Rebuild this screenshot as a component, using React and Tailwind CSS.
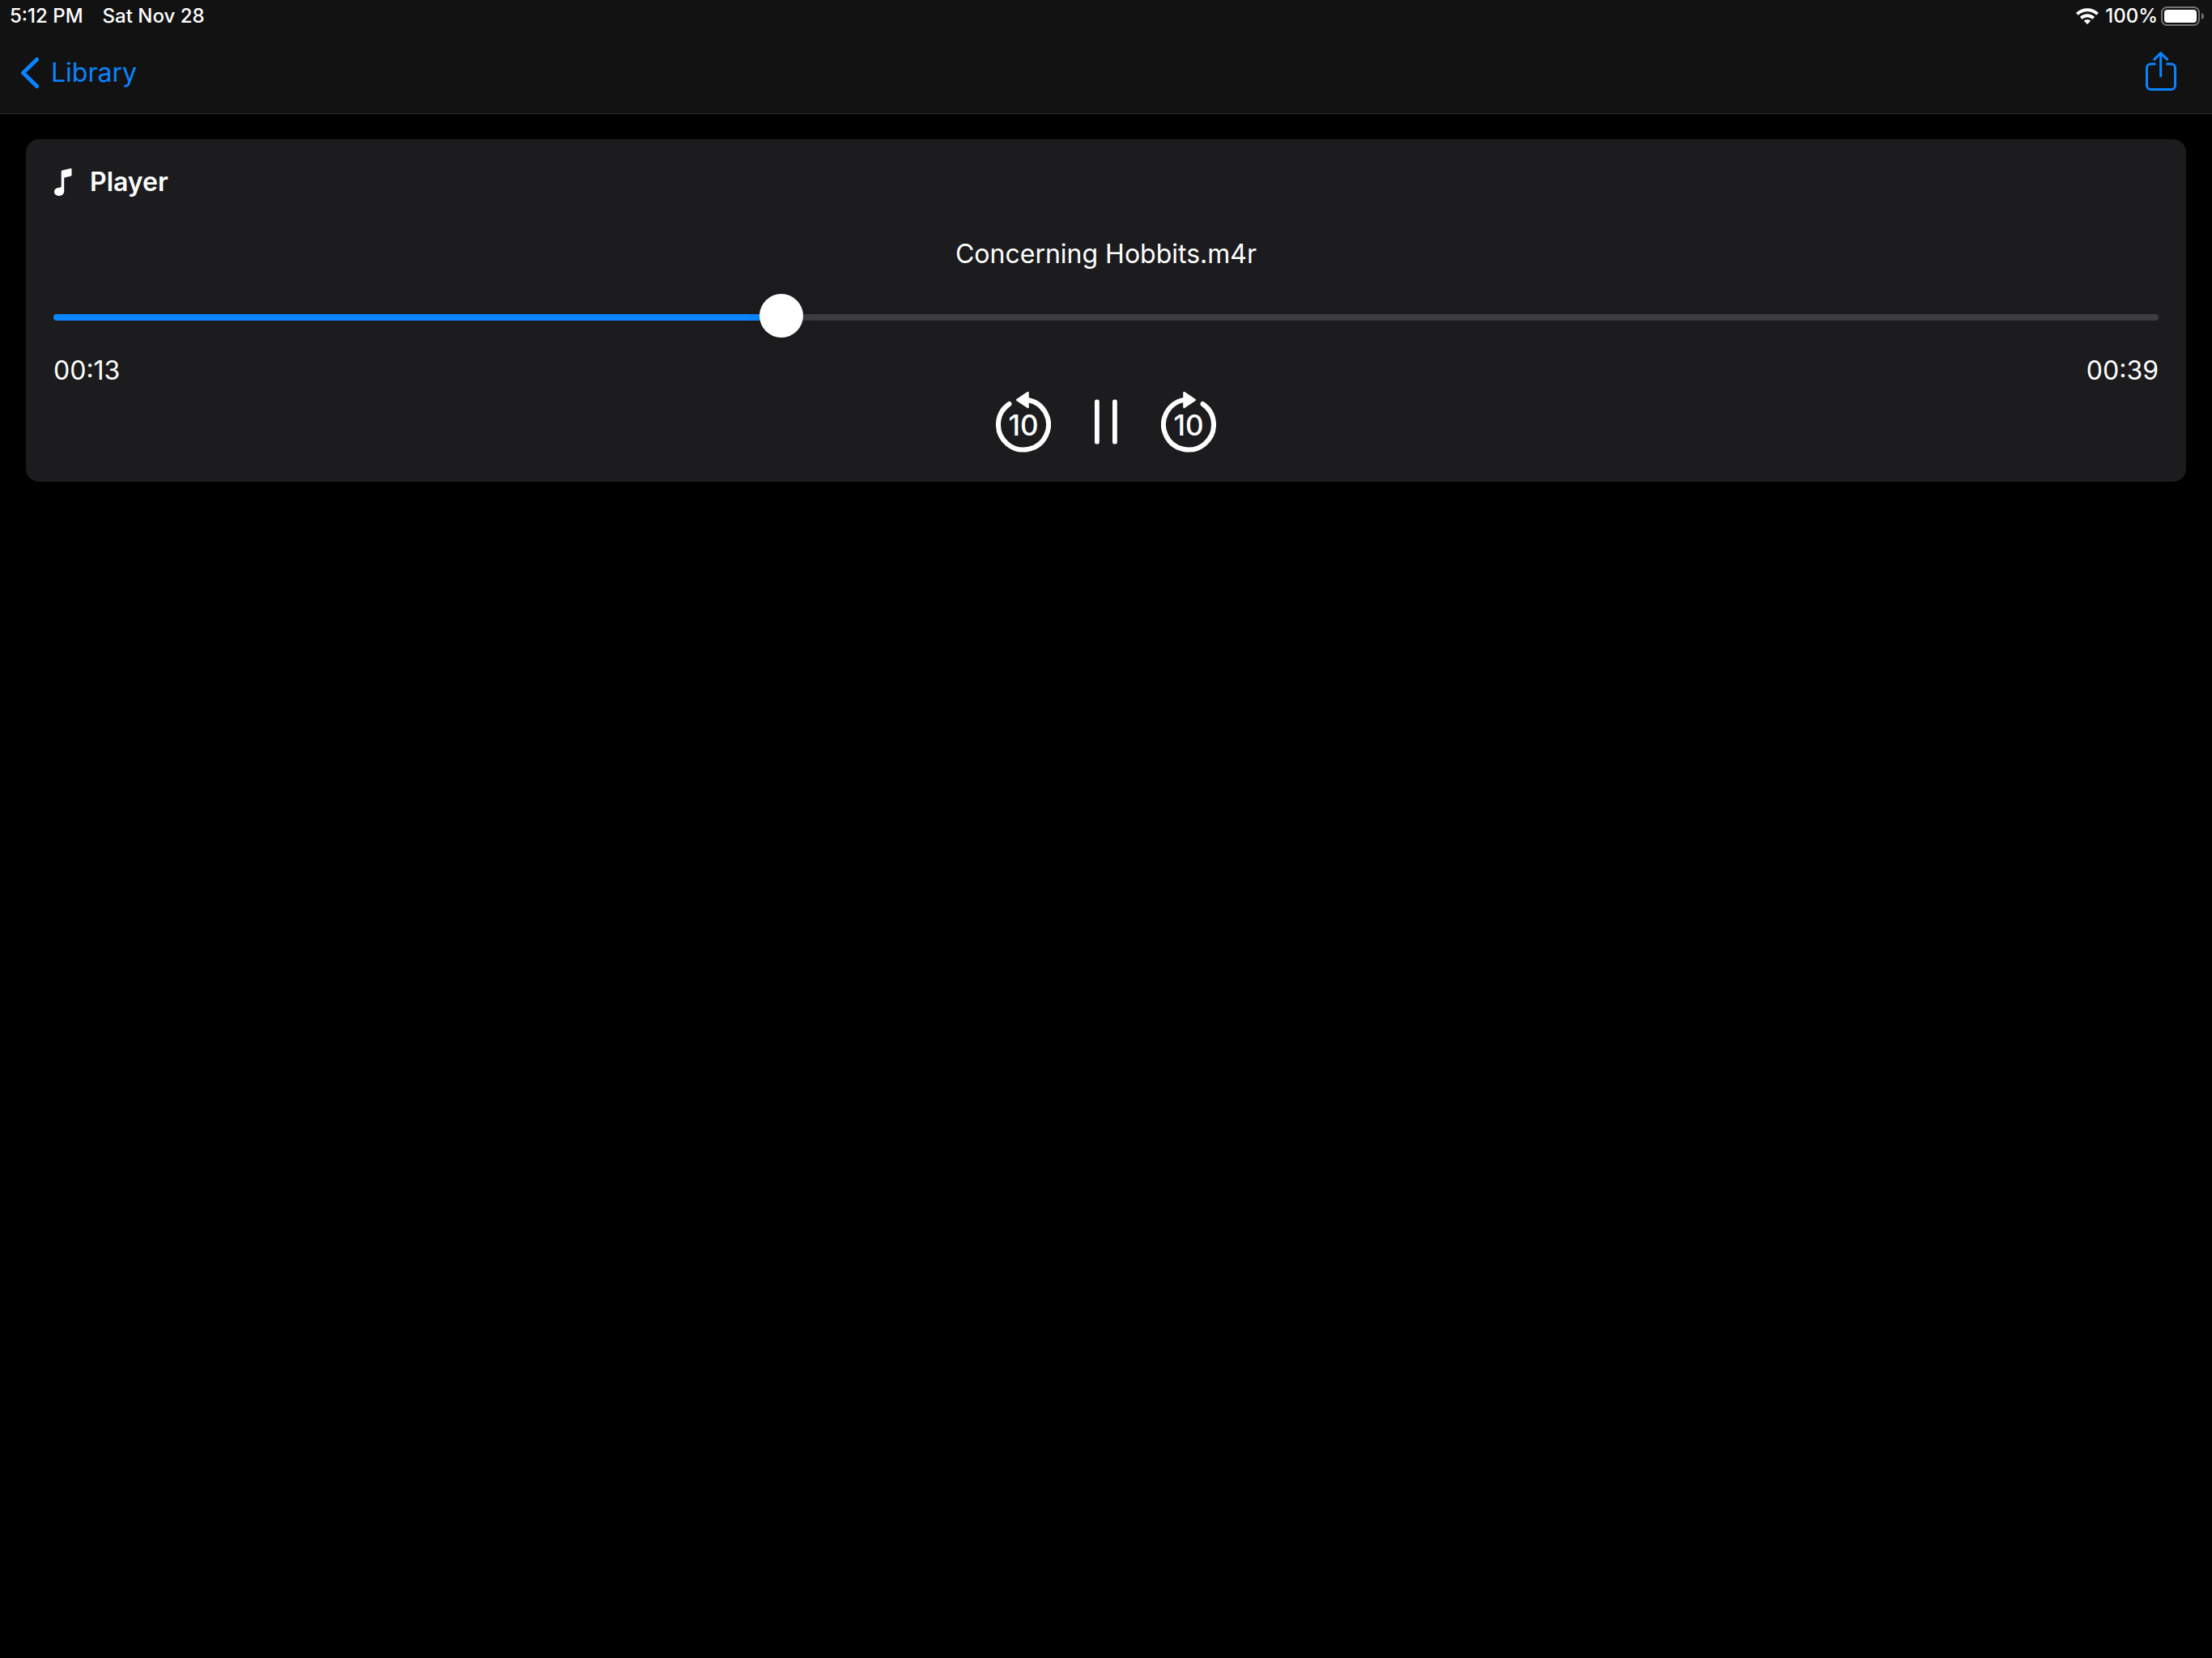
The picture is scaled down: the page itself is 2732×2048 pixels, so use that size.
import { useState } from "react";

const DURATION = 39;

function formatTime(seconds) {
  const s = Math.floor(seconds);
  return `${String(Math.floor(s / 60)).padStart(2, "0")}:${String(s % 60).padStart(2, "0")}`;
}

function WifiIcon() {
  return (
    <svg width="28" height="20" viewBox="0 0 28 20" fill="none" stroke="white" strokeWidth="4" aria-hidden="true">
      <path d="M1.4 7.4a17.8 17.8 0 0 1 25.2 0" />
      <path d="M6.3 12.4a10.9 10.9 0 0 1 15.4 0" />
      <path d="M14 20l-4.2-4.2a6 6 0 0 1 8.4 0z" fill="white" stroke="none" />
    </svg>
  );
}

function BatteryIcon() {
  return (
    <svg width="53" height="24" viewBox="0 0 53 24" fill="none" aria-hidden="true">
      <rect x="1" y="1" width="46" height="22" rx="6.5" stroke="#747474" strokeWidth="2" />
      <rect x="4" y="4" width="40" height="16" rx="4" fill="white" />
      <path d="M50 8c2 .7 3 2.200 3 4s-1 3.300-3 4z" fill="#747474" />
    </svg>
  );
}

function ChevronIcon() {
  return (
    <svg width="24" height="40" viewBox="0 0 24 40" fill="none" stroke="currentColor" strokeWidth="5" strokeLinecap="round" strokeLinejoin="round" aria-hidden="true">
      <path d="M20.500 3.500L3.500 20l17 16.500" />
    </svg>
  );
}

function ShareIcon() {
  return (
    <svg width="38" height="52" viewBox="0 0 38 52" fill="none" stroke="currentColor" strokeWidth="3" strokeLinecap="round" strokeLinejoin="round" aria-hidden="true">
      <path d="M12.500 15H6.500a5 5 0 0 0-5 5v21.500a5 5 0 0 0 5 5h25a5 5 0 0 0 5-5V20a5 5 0 0 0-5-5h-6" strokeLinecap="butt" />
      <path d="M18.700 30V1.800M10.700 9.300l8-7.700 8 7.700" />
    </svg>
  );
}

function NoteIcon() {
  return (
    <svg width="22" height="34" viewBox="0 0 22 34" fill="white" aria-hidden="true">
      <path d="M8.700 4.600c0-1.300.6-2 1.900-2.300L20.300.1c.8-.2 1.200.1 1.200.9v7.200c0 .7-.3 1-.9 1.200l-8.400 2v16.800c0 3.300-2.700 5.700-6.300 5.700C2.500 33.900 0 31.900 0 29c0-3.100 2.500-4.900 5.700-5.300l1.700-.3c.9-.2 1.300-.6 1.300-1.500z" />
    </svg>
  );
}

function SkipIcon({ forward }) {
  return (
    <svg width="68" height="76" viewBox="0 0 68 76" fill="none" aria-hidden="true">
      <g transform={forward ? "matrix(-1 0 0 1 68 0)" : undefined} stroke="white" strokeLinecap="round" strokeLinejoin="round">
        <path d="M16.500 15.900A31 31 0 1 0 39 10.900" strokeWidth="6" />
        <path d="M26.200 11L39.500 2v18z" fill="white" strokeWidth="2.500" />
      </g>
      <text x="34" y="55" textAnchor="middle" fill="white" fontFamily="Inter, sans-serif" fontSize="35" fontWeight="500">
        10
      </text>
    </svg>
  );
}

function PauseIcon() {
  return (
    <svg width="28" height="56" viewBox="0 0 28 56" fill="white" aria-hidden="true">
      <rect x="0" y="0.500" width="5.800" height="55" rx="2.600" />
      <rect x="22" y="0.500" width="5.800" height="55" rx="2.600" />
    </svg>
  );
}

export default function App() {
  const [position, setPosition] = useState(13.36);
  const percent = (position / DURATION) * 100;

  return (
    <div className="min-h-screen bg-black font-['Inter',sans-serif] text-[32px] leading-[42px] text-white">
      <header className="border-b border-[#2a2a2b] bg-[#121212]">
        <div className="flex h-10 items-center justify-between pr-[10px] pl-3 text-2xl leading-7 font-medium">
          <div className="flex gap-6">
            <span>5:12 PM</span>
            <span>Sat Nov 28</span>
          </div>
          <div className="flex items-center">
            <WifiIcon />
            <span className="mr-1 ml-2">100%</span>
            <BatteryIcon />
          </div>
        </div>
        <nav className="flex h-[100px] items-center justify-between pr-11 pl-[25px] text-[#0a84ff]">
          <a href="#library" className="flex items-center gap-[14px]">
            <ChevronIcon />
            Library
          </a>
          <button type="button" aria-label="Share">
            <ShareIcon />
          </button>
        </nav>
      </header>

      <main className="px-8 pt-[31px]">
        <section className="rounded-2xl bg-[#1c1c1e] px-[34px] pt-8 pb-9">
          <h1 className="flex items-center gap-[22px] pl-px font-semibold">
            <NoteIcon />
            Player
          </h1>
          <p className="mt-[47px] text-center">Concerning Hobbits.m4r</p>
          <input
            type="range"
            aria-label="Playback position"
            min="0"
            max={DURATION}
            step="any"
            value={position}
            onChange={(e) => setPosition(Number(e.target.value))}
            style={{ "--fill": `${percent}%` }}
            className="mt-[30px] block h-[54px] w-full appearance-none bg-transparent [&::-webkit-slider-runnable-track]:h-2 [&::-webkit-slider-runnable-track]:rounded-full [&::-webkit-slider-runnable-track]:bg-[linear-gradient(to_right,#0a84ff_var(--fill),#3d3d41_var(--fill))] [&::-webkit-slider-thumb]:-mt-[25px] [&::-webkit-slider-thumb]:size-[54px] [&::-webkit-slider-thumb]:appearance-none [&::-webkit-slider-thumb]:rounded-full [&::-webkit-slider-thumb]:bg-white [&::-webkit-slider-thumb]:shadow-[0_6px_20px_rgba(0,0,0,0.08)]"
          />
          <div className="mt-[18px] flex justify-between">
            <span>{formatTime(position)}</span>
            <span>{formatTime(DURATION)}</span>
          </div>
          <div className="mt-1 flex items-center justify-center gap-[54px]">
            <button type="button" aria-label="Back 10 seconds">
              <SkipIcon />
            </button>
            <button type="button" aria-label="Pause">
              <PauseIcon />
            </button>
            <button type="button" aria-label="Forward 10 seconds">
              <SkipIcon forward />
            </button>
          </div>
        </section>
      </main>
    </div>
  );
}
